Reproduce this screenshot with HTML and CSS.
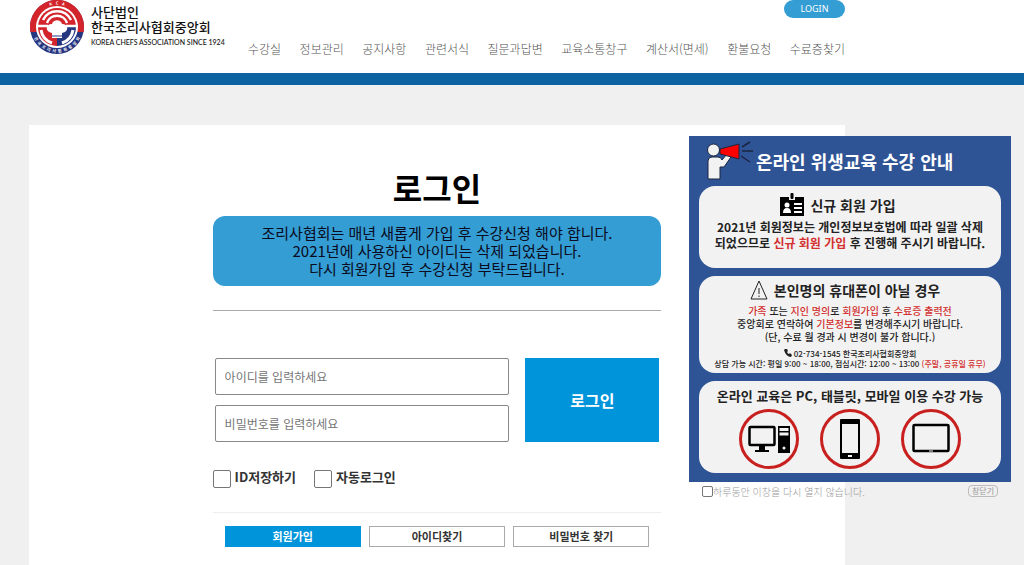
FILE: index.html
```
<!DOCTYPE html>
<html lang="ko">
<head>
  <meta charset="UTF-8">
  <meta name="viewport" content="width=device-width, initial-scale=1.0">
  <title>로그인 - 한국조리사협회중앙회</title>
  <link rel="stylesheet" href="styles.css">
</head>
<body>
  <header class="header">
    <div class="header-inner">
      <a href="#" class="logo">
        <svg class="logo-mark" viewBox="0 0 54 54" aria-hidden="true">
          <defs>
            <path id="arcTop" d="M4.500 27a22.500 22.500 0 0 1 45 0"/>
            <path id="arcBottom" d="M1.500 27a25.500 25.500 0 0 0 51 0"/>
          </defs>
          <circle cx="27" cy="27" r="27" fill="#26357f"/>
          <path d="M0.500 32A27 27 0 1 1 53.500 32z" fill="#d3232b"/>
          <circle cx="27" cy="27" r="21" fill="#fff"/>
          <path d="M8 27a19 19 0 0 1 38 0z" fill="#d3232b"/>
          <path d="M27 27h19a19 19 0 0 1-19 19z" fill="#26357f"/>
          <path d="M8 27h19v19A19 19 0 0 1 8 27z" fill="#d3232b"/>
          <g fill="none" stroke="#fff">
            <path d="M13 20a15.500 15.500 0 0 1 28 0" stroke-width="2.500"/>
            <path d="M17 23a10.500 10.500 0 0 1 20 0" stroke-width="2.500"/>
            <path d="M6 26h12M36 26h12" stroke-width="2.500"/>
            <path d="M11 30a16.500 16.500 0 0 0 11 13M43 30a16.500 16.500 0 0 1-11 13" stroke-width="3"/>
          </g>
          <path d="M22 38v-5c-7-1-7-9 0-9 1-5 9-5 10 0 7 0 7 8 0 9v5z" fill="#fff"/>
          <path d="M22 36h10" stroke="#26357f" stroke-width="1"/>
          <text class="logo-ring"><textPath href="#arcTop" startOffset="50%" text-anchor="middle">K &#160; C &#160; A</textPath></text>
          <text class="logo-ring"><textPath href="#arcBottom" startOffset="50%" text-anchor="middle">한 &#160;국 &#160;조 &#160;리 &#160;사 &#160;협 &#160;회 &#160;중 &#160;앙 &#160;회</textPath></text>
        </svg>
        <span class="logo-text">
          <span class="logo-name">사단법인<br>한국조리사협회중앙회</span>
          <span class="logo-eng">KOREA CHEFS ASSOCIATION SINCE 1924</span>
        </span>
      </a>
      <div class="header-right">
        <a href="#" class="btn-top-login">LOGIN</a>
        <nav class="nav">
          <a href="#">수강실</a>
          <a href="#">정보관리</a>
          <a href="#">공지사항</a>
          <a href="#">관련서식</a>
          <a href="#">질문과답변</a>
          <a href="#">교육소통창구</a>
          <a href="#">계산서(면세)</a>
          <a href="#">환불요청</a>
          <a href="#">수료증찾기</a>
        </nav>
      </div>
    </div>
  </header>

  <main class="content">
    <div class="login-box">
      <h1>로그인</h1>
      <p class="notice">
        조리사협회는 매년 새롭게 가입 후 수강신청 해야 합니다.<br>
        2021년에 사용하신 아이디는 삭제 되었습니다.<br>
        다시 회원가입 후 수강신청 부탁드립니다.
      </p>

      <form class="login-form">
        <div class="login-row">
          <div class="fields">
            <input type="text" name="userid" placeholder="아이디를 입력하세요" aria-label="아이디">
            <input type="password" name="userpw" placeholder="비밀번호를 입력하세요" aria-label="비밀번호">
          </div>
          <button type="submit" class="btn-login">로그인</button>
        </div>
        <div class="options">
          <input type="checkbox" id="saveId"><label for="saveId">ID저장하기</label>
          <input type="checkbox" id="autoLogin"><label for="autoLogin">자동로그인</label>
        </div>
      </form>

      <div class="member-links">
        <a href="#" class="active">회원가입</a>
        <a href="#">아이디찾기</a>
        <a href="#">비밀번호 찾기</a>
      </div>
    </div>
  </main>

  <!-- Notice popup -->
  <div class="popup">
    <div class="popup-body">
      <div class="popup-title">
        <svg class="icon-speaker" viewBox="0 0 46 40" aria-hidden="true">
          <g stroke="#1b2440" stroke-width="1">
            <path d="M1 38V20q0-4 4-4h6q3 0 4 3l5-6 4 3-7 10h-4v12z" fill="#f2f2f2"/>
            <circle cx="6.500" cy="9" r="6" fill="#f2f2f2"/>
            <path d="M13 8l19-5v15l-19-5z" fill="#f00"/>
          </g>
          <path d="M35 6l8-5M35 10h11M34 15l9 6" stroke="#1b2440" stroke-width="1.500"/>
        </svg>
        <h2>온라인 위생교육 수강 안내</h2>
      </div>

      <section class="card card-join">
        <h3>
          <svg class="icon-id" viewBox="0 0 24 24" aria-hidden="true">
            <path d="M0 4h9v3h6V4h9v19H0z" fill="#000"/>
            <rect x="10.500" y="0" width="3" height="6" rx="1" fill="#000"/>
            <circle cx="7" cy="12" r="2.500" fill="#fff"/>
            <path d="M3 20q0-5 4-5t4 5zM14 10h8v2h-8zM14 14h8v2h-8zM14 18h8v2h-8z" fill="#fff"/>
          </svg>
          신규 회원 가입
        </h3>
        <p>2021년 회원정보는 개인정보보호법에 따라 일괄 삭제<br>되었으므로 <em>신규 회원 가입</em> 후 진행해 주시기 바랍니다.</p>
      </section>

      <section class="card card-phone">
        <h3>
          <svg class="icon-warn" viewBox="0 0 18 20" aria-hidden="true">
            <path d="M9 1l8 18H1z" fill="none" stroke="#222" stroke-width="1"/>
            <path d="M9 8v6M9 15.500v1.500" stroke="#222" stroke-width="1"/>
          </svg>
          본인명의 휴대폰이 아닐 경우
        </h3>
        <p><em>가족</em> 또는 <em>지인 명의</em>로 <em>회원가입</em> 후 <em>수료증 출력전</em><br>중앙회로 연락하여 <em>기본정보</em>를 변경해주시기 바랍니다.<br>(단, 수료 월 경과 시 변경이 불가 합니다.)</p>
        <p class="contact">
          <svg class="icon-tel" viewBox="0 0 8 8" aria-hidden="true"><path d="M1 0l2 0 1 2-1 1q1 2 2 2l1-1 2 2-1 2Q2 8 0 1z" fill="#222"/></svg>
          02-734-1545 한국조리사협회중앙회<br>상담 가능 시간: 평일 9:00 ~ 18:00, 점심시간: 12:00 ~ 13:00 <em>(주말, 공휴일 휴무)</em>
        </p>
      </section>

      <section class="card card-device">
        <h3>온라인 교육은 PC, 태블릿, 모바일 이용 수강 가능</h3>
        <div class="devices">
          <svg viewBox="0 0 60 60" aria-hidden="true">
            <circle cx="30" cy="30" r="28.500" fill="none" stroke="#c8201f" stroke-width="3"/>
            <rect x="10.500" y="18" width="25" height="18" rx="1" fill="none" stroke="#000" stroke-width="2.500"/>
            <path d="M20 37h6v4h4v2H16v-2h4zM39 17h12v27H39z"/>
            <path d="M40.500 19h9v3h-9zM40.500 23.500h9v3h-9z" fill="#f2f2f2"/>
            <circle cx="45" cy="39" r="1.500" fill="#f2f2f2"/>
          </svg>
          <svg viewBox="0 0 60 60" aria-hidden="true">
            <circle cx="30" cy="30" r="28.500" fill="none" stroke="#c8201f" stroke-width="3"/>
            <rect x="20" y="10" width="20" height="40" rx="1"/>
            <path d="M22 15h16v29H22z" fill="#f2f2f2"/>
            <path d="M28 46h4v2h-4z" fill="#f2f2f2"/>
          </svg>
          <svg viewBox="0 0 60 60" aria-hidden="true">
            <circle cx="30" cy="30" r="28.500" fill="none" stroke="#c8201f" stroke-width="3"/>
            <rect x="12.500" y="16" width="35" height="26" rx="1" fill="none" stroke="#000" stroke-width="2.500"/>
            <path d="M28 42h4" stroke="#f2f2f2" stroke-width="1"/>
          </svg>
        </div>
      </section>
    </div>
    <div class="popup-footer">
      <input type="checkbox" id="todayClose"><label for="todayClose">하루동안 이창을 다시 열지 않습니다.</label>
      <button type="button">창닫기</button>
    </div>
  </div>
</body>
</html>
```

FILE: styles.css
```
* {
  box-sizing: border-box;
}
body {
  margin: 0;
  font-family: "Noto Sans CJK KR", sans-serif;
  font-size: 12px;
  color: #333;
  background-color: #f0f0f0;
}
a {
  color: inherit;
  text-decoration: none;
}
h1, h2, h3, p {
  margin: 0;
}

/* Header */
.header {
  height: 85px;
  background-color: #fff;
  border-bottom: 12px solid #0d63a0;
}
.header-inner {
  display: flex;
  justify-content: space-between;
  max-width: 816px;
  margin-left: 29px;
}
.logo {
  display: flex;
  gap: 6px;
}
.logo-mark {
  width: 56px;
  height: 54px;
}
.logo-ring {
  font-size: 4px;
  font-weight: bold;
  fill: #fff;
}
.logo-text {
  display: flex;
  flex-direction: column;
  padding-top: 4px;
  color: #111;
}
.logo-name {
  font-size: 13px;
  font-weight: 500;
  line-height: 15px;
}
.logo-eng {
  font-family: Lato, sans-serif;
  font-size: 7px;
  font-weight: 500;
  line-height: 16px;
}
.header-right {
  display: flex;
  flex-direction: column;
  width: 597px;
}
.btn-top-login {
  align-self: flex-end;
  width: 61px;
  height: 18px;
  border-radius: 9px;
  background-color: #349dd3;
  color: #fff;
  font-family: "Noto Sans", sans-serif;
  font-size: 9px;
  line-height: 17px;
  text-align: center;
}
.nav {
  display: flex;
  justify-content: space-between;
  margin-top: 22px;
  color: #555;
  font-weight: 300;
  line-height: 18px;
}

/* Login */
.content {
  max-width: 816px;
  margin: 40px 0 0 29px;
  padding: 42px 0 18px;
  background-color: #fff;
}
.login-box {
  width: 55%;
  margin: 0 auto;
}
h1 {
  color: #000;
  font-size: 32px;
  line-height: 40px;
  text-align: center;
}
.notice {
  margin-top: 9px;
  padding: 8px 0;
  border-radius: 12px;
  background-color: #349dd3;
  color: #0a0a20;
  font-size: 15px;
  line-height: 18px;
  text-align: center;
}
.login-form {
  margin-top: 24px;
  padding: 47px 2px 24px;
  border-top: 1px solid #aaa;
  border-bottom: 1px solid #eee;
}
.login-row {
  display: flex;
  gap: 16px;
}
.fields {
  display: flex;
  flex: 1;
  flex-direction: column;
  gap: 10px;
}
.fields input {
  width: 100%;
  height: 37px;
  padding: 0 9px;
  border: 1px solid #888;
  border-radius: 2px;
  font-family: inherit;
  font-size: 12px;
}
.fields input::placeholder {
  color: #757575;
}
.btn-login {
  width: 134px;
  border: 0;
  background-color: #0095db;
  color: #fff;
  font-family: inherit;
  font-size: 16px;
  font-weight: bold;
}
.options {
  display: flex;
  margin: 28px -2px 0;
}
.options input,
.popup-footer input {
  flex-shrink: 0;
  appearance: none;
  width: 18px;
  height: 18px;
  margin: 0;
  border: 1px solid #767676;
  border-radius: 2px;
  background-color: #fff;
}
.options input:checked,
.popup-footer input:checked {
  background-color: #0095db;
}
.options label {
  margin: 0 18px 0 4px;
  font-size: 13px;
  font-weight: bold;
  line-height: 14px;
}
.member-links {
  display: flex;
  gap: 8px;
  padding: 13px 12px 0;
}
.member-links a {
  flex: 1;
  border: 1px solid #aaa;
  font-size: 11px;
  font-weight: bold;
  line-height: 19px;
  text-align: center;
}
.member-links .active {
  border-color: #0095db;
  background-color: #0095db;
  color: #fff;
}

/* Popup */
.popup {
  position: absolute;
  top: 136px;
  right: 13px;
  width: 322px;
}
.popup-body {
  padding: 0 10px 9px;
  background-color: #2f5496;
}
.popup-title {
  display: flex;
  align-items: center;
  gap: 3px;
  height: 50px;
  padding-left: 8px;
}
.icon-speaker {
  width: 46px;
  height: 40px;
}
.popup-title h2 {
  color: #fff;
  font-size: 18px;
  font-weight: bold;
}
.card {
  margin-bottom: 8px;
  border-radius: 16px;
  background-color: #f2f2f2;
  color: #222;
  font-weight: 500;
  text-align: center;
}
.card:last-child {
  margin-bottom: 0;
}
.card h3 {
  display: flex;
  align-items: center;
  justify-content: center;
  gap: 6px;
  font-size: 14px;
  font-weight: bold;
  line-height: 20px;
}
.card em {
  color: #d3302f;
  font-style: normal;
}
.card-join {
  height: 82px;
  padding-top: 5px;
}
.card-join h3 {
  height: 28px;
  padding-right: 24px;
}
.card-join p {
  font-weight: bold;
  line-height: 16px;
}
.icon-id {
  width: 24px;
  height: 24px;
}
.card-phone {
  height: 97px;
  padding-top: 4px;
}
.card-phone h3 {
  padding-right: 10px;
}
.card-phone p {
  padding-top: 4px;
  font-size: 10px;
  line-height: 13px;
}
.card-phone .contact {
  padding-top: 6px;
  font-size: 8px;
  line-height: 10px;
}
.icon-warn {
  width: 18px;
  height: 20px;
}
.icon-tel {
  width: 8px;
  height: 8px;
}
.card-device {
  height: 92px;
  padding-top: 5px;
}
.card-device h3 {
  font-size: 13px;
}
.devices {
  display: flex;
  justify-content: center;
  gap: 21px;
  margin-top: 3px;
}
.devices svg {
  width: 60px;
  height: 60px;
}
.popup-footer {
  display: flex;
  align-items: center;
  height: 18px;
  padding: 0 13px;
  color: #999;
  font-size: 10px;
  font-weight: 300;
}
.popup-footer input {
  width: 11px;
  height: 11px;
}
.popup-footer button {
  width: 30px;
  height: 12px;
  margin-left: auto;
  padding: 0;
  border: 1px solid #bbb;
  border-radius: 4px;
  background: none;
  color: #999;
  font-family: inherit;
  font-size: 8px;
  line-height: 10px;
}
```
